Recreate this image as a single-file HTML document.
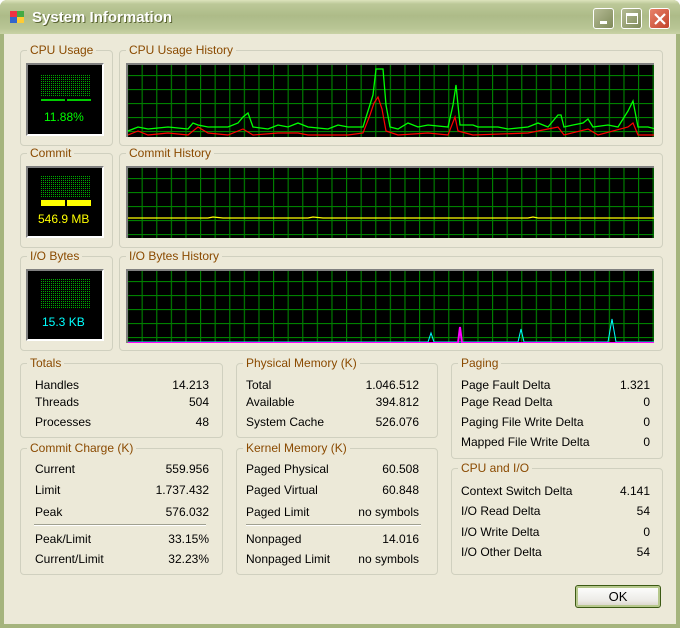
<!DOCTYPE html><html><head><style>
*{margin:0;padding:0;box-sizing:border-box}
body{width:680px;height:628px;overflow:hidden;background:#fff;font-family:"Liberation Sans",sans-serif;font-size:12px;color:#000}
#win{position:absolute;left:0;top:0;width:680px;height:628px;background:#a5b47d;border-radius:7px 7px 0 0}
#title{position:absolute;left:0;top:0;width:680px;height:34px;border-radius:7px 7px 0 0;background:linear-gradient(#dde3bd 0,#bcc898 4px,#adbb88 16px,#b8c594 28px,#c9d2a6 34px)}
#title span{position:absolute;left:32px;top:9px;color:#fff;font-weight:bold;font-size:15px;text-shadow:1px 1px 0 #5a6433}
#body{position:absolute;left:4px;top:34px;width:672px;height:590px;background:#ece9d8}
.btn{position:absolute;top:8px;width:21px;height:21px;border:1px solid #fff;border-radius:3px;background:linear-gradient(135deg,#b5bb95,#7f8a5a)}
.gb{position:absolute;border:1px solid #d0d0bf;border-radius:4px}
.gl{position:absolute;top:-8px;left:6px;background:#ece9d8;padding:0 3px;color:#8a4a00;font-size:12px;line-height:14px}
.t{position:absolute;font-size:12px;line-height:14px;white-space:nowrap}
.r{text-align:right}
.meter{position:absolute;background:#000;border:2px solid;border-color:#808080 #fff #fff #808080}
svg{position:absolute}
</style></head><body>
<div id="win">
<div id="title">
<svg style="left:8px;top:9px" width="18" height="16"><rect x="2" y="2" width="7" height="6" fill="#e34" /><rect x="9" y="2" width="7" height="6" fill="#4a4"/><rect x="2" y="8" width="7" height="6" fill="#36c"/><rect x="9" y="8" width="7" height="6" fill="#fc3"/></svg>
<span>System Information</span>
<div class="btn" style="left:593px"><div style="position:absolute;left:6px;top:12px;width:7px;height:3px;background:#fff"></div></div>
<div class="btn" style="left:621px"><div style="position:absolute;left:4px;top:4px;width:12px;height:11px;border:1px solid #fff;border-top-width:3px"></div></div>
<div class="btn" style="left:649px;background:linear-gradient(135deg,#e8826a,#c2432a)"><svg style="left:4px;top:4px" width="12" height="12"><path d="M1 1L11 11M11 1L1 11" stroke="#fff" stroke-width="2.2"/></svg></div>
</div>
<div id="body"></div>
</div>

<div class="gb" style="left:20px;top:50px;width:93px;height:96px"><div class="gl">CPU Usage</div></div>
<div class="gb" style="left:119px;top:50px;width:544px;height:96px"><div class="gl">CPU Usage History</div></div>
<div class="gb" style="left:20px;top:153px;width:93px;height:95px"><div class="gl">Commit</div></div>
<div class="gb" style="left:119px;top:153px;width:544px;height:95px"><div class="gl">Commit History</div></div>
<div class="gb" style="left:20px;top:256px;width:93px;height:95px"><div class="gl">I/O Bytes</div></div>
<div class="gb" style="left:119px;top:256px;width:544px;height:95px"><div class="gl">I/O Bytes History</div></div>

<div class="meter" style="left:26px;top:63px;width:78px;height:73px">
<svg style="left:13px;top:10px" width="50" height="30"><rect x="0" y="0" width="50" height="22" fill="url(#dots)"/><rect x="0" y="24" width="24" height="2" fill="#0c0"/><rect x="26" y="24" width="24" height="2" fill="#0c0"/></svg>
<div class="t" style="left:16px;top:45px;color:#0f0">11.88%</div></div>
<div class="meter" style="left:26px;top:166px;width:78px;height:72px">
<svg style="left:13px;top:8px" width="50" height="30"><rect x="0" y="0" width="50" height="22" fill="url(#dots)"/><rect x="0" y="24" width="24" height="6" fill="#ff0"/><rect x="26" y="24" width="24" height="6" fill="#ff0"/></svg>
<div class="t" style="left:10px;top:44px;color:#ff0">546.9 MB</div></div>
<div class="meter" style="left:26px;top:269px;width:78px;height:72px">
<svg style="left:13px;top:8px" width="50" height="30"><rect x="0" y="0" width="50" height="30" fill="url(#dots)"/></svg>
<div class="t" style="left:14px;top:44px;color:#0ff">15.3 KB</div></div>

<svg width="0" height="0"><defs>
<pattern id="dots" width="2" height="2" patternUnits="userSpaceOnUse"><rect width="1" height="1" fill="#0a0"/></pattern>
<pattern id="grid" width="14.6" height="14" patternUnits="userSpaceOnUse" x="-1" y="-4"><rect width="14.6" height="14" fill="#000"/><path d="M0.5 0V14M0 0.5H14.6" stroke="#008000" stroke-width="1.3"/></pattern>
</defs></svg>

<svg style="left:126px;top:63px;border-top:2px solid #808080;border-left:2px solid #808080" width="528" height="74"><rect width="528" height="74" fill="url(#grid)"/>
<polyline fill="none" stroke="#0f0" stroke-width="1.3" points="0,66 10,62 20,64 40,62 60,64 65,58 70,60 80,62 100,62 110,58 115,52 120,48 125,62 140,64 150,60 160,62 170,58 180,62 200,64 210,60 220,62 235,62 245,30 248,4 255,4 258,40 262,62 270,64 280,58 290,62 300,60 320,62 325,40 328,20 332,60 345,60 350,62 370,62 380,64 400,62 410,58 420,62 430,50 433,50 436,62 445,60 455,58 460,54 465,62 480,60 490,62 500,46 505,36 510,62 520,62 528,64"/>
<polyline fill="none" stroke="#f00" stroke-width="1.2" points="0,70 10,66 20,70 40,68 60,70 70,62 80,68 100,70 115,64 125,70 150,68 170,68 180,70 200,70 220,70 235,68 242,50 246,38 250,32 254,44 258,66 270,70 300,68 320,70 327,52 330,66 345,70 400,68 430,62 436,70 460,64 470,70 500,62 505,58 510,70 528,70"/>
</svg>
<svg style="left:126px;top:166px;border-top:2px solid #808080;border-left:2px solid #808080" width="528" height="72"><rect width="528" height="72" fill="url(#grid)"/>
<polyline fill="none" stroke="#ff0" stroke-width="1.2" points="0,50 80,50 85,49 95,50 180,50 185,49 195,50 400,50 405,49 410,50 528,50"/></svg>
<svg style="left:126px;top:269px;border-top:2px solid #808080;border-left:2px solid #808080" width="528" height="74"><rect width="528" height="74" fill="url(#grid)"/>
<polyline fill="none" stroke="#0ff" stroke-width="1" points="0,71 300,71 303,62 306,71 390,71 393,58 396,71 480,71 484,48 488,71 528,71"/>
<polyline fill="none" stroke="#f0f" stroke-width="2" points="0,72 330,72 332,56 334,72 528,72"/></svg>

<div class="gb" style="left:20px;top:363px;width:203px;height:75px"><div class="gl">Totals</div></div>
<div class="gb" style="left:236px;top:363px;width:202px;height:75px"><div class="gl">Physical Memory (K)</div></div>
<div class="gb" style="left:451px;top:363px;width:212px;height:96px"><div class="gl">Paging</div></div>
<div class="gb" style="left:20px;top:448px;width:203px;height:127px"><div class="gl">Commit Charge (K)</div></div>
<div class="gb" style="left:236px;top:448px;width:202px;height:127px"><div class="gl">Kernel Memory (K)</div></div>
<div class="gb" style="left:451px;top:468px;width:212px;height:107px"><div class="gl">CPU and I/O</div></div>

<div class="t" style="left:35px;top:378px">Handles</div><div class="t r" style="left:120px;width:89px;top:378px">14.213</div>
<div class="t" style="left:35px;top:395px">Threads</div><div class="t r" style="left:120px;width:89px;top:395px">504</div>
<div class="t" style="left:35px;top:415px">Processes</div><div class="t r" style="left:120px;width:89px;top:415px">48</div>

<div class="t" style="left:246px;top:378px">Total</div><div class="t r" style="left:330px;width:89px;top:378px">1.046.512</div>
<div class="t" style="left:246px;top:395px">Available</div><div class="t r" style="left:330px;width:89px;top:395px">394.812</div>
<div class="t" style="left:246px;top:415px">System Cache</div><div class="t r" style="left:330px;width:89px;top:415px">526.076</div>

<div class="t" style="left:461px;top:378px">Page Fault Delta</div><div class="t r" style="left:560px;width:90px;top:378px">1.321</div>
<div class="t" style="left:461px;top:395px">Page Read Delta</div><div class="t r" style="left:560px;width:90px;top:395px">0</div>
<div class="t" style="left:461px;top:415px">Paging File Write Delta</div><div class="t r" style="left:560px;width:90px;top:415px">0</div>
<div class="t" style="left:461px;top:435px">Mapped File Write Delta</div><div class="t r" style="left:560px;width:90px;top:435px">0</div>

<div class="t" style="left:35px;top:462px">Current</div><div class="t r" style="left:120px;width:89px;top:462px">559.956</div>
<div class="t" style="left:35px;top:483px">Limit</div><div class="t r" style="left:120px;width:89px;top:483px">1.737.432</div>
<div class="t" style="left:35px;top:505px">Peak</div><div class="t r" style="left:120px;width:89px;top:505px">576.032</div>
<div style="position:absolute;left:34px;top:524px;width:172px;height:2px;border-top:1px solid #a0a090;border-bottom:1px solid #fff"></div>
<div class="t" style="left:35px;top:532px">Peak/Limit</div><div class="t r" style="left:120px;width:89px;top:532px">33.15%</div>
<div class="t" style="left:35px;top:552px">Current/Limit</div><div class="t r" style="left:120px;width:89px;top:552px">32.23%</div>

<div class="t" style="left:246px;top:462px">Paged Physical</div><div class="t r" style="left:330px;width:89px;top:462px">60.508</div>
<div class="t" style="left:246px;top:483px">Paged Virtual</div><div class="t r" style="left:330px;width:89px;top:483px">60.848</div>
<div class="t" style="left:246px;top:505px">Paged Limit</div><div class="t r" style="left:330px;width:89px;top:505px">no symbols</div>
<div style="position:absolute;left:246px;top:524px;width:175px;height:2px;border-top:1px solid #a0a090;border-bottom:1px solid #fff"></div>
<div class="t" style="left:246px;top:532px">Nonpaged</div><div class="t r" style="left:330px;width:89px;top:532px">14.016</div>
<div class="t" style="left:246px;top:552px">Nonpaged Limit</div><div class="t r" style="left:330px;width:89px;top:552px">no symbols</div>

<div class="t" style="left:461px;top:484px">Context Switch Delta</div><div class="t r" style="left:560px;width:90px;top:484px">4.141</div>
<div class="t" style="left:461px;top:504px">I/O Read Delta</div><div class="t r" style="left:560px;width:90px;top:504px">54</div>
<div class="t" style="left:461px;top:525px">I/O Write Delta</div><div class="t r" style="left:560px;width:90px;top:525px">0</div>
<div class="t" style="left:461px;top:545px">I/O Other Delta</div><div class="t r" style="left:560px;width:90px;top:545px">54</div>

<div style="position:absolute;left:575px;top:585px;width:86px;height:23px;border:1px solid #3c5a14;border-radius:3px;background:linear-gradient(#fff,#ecebe6 70%,#d6d0c5);box-shadow:inset 0 0 0 2px #b6c88c;text-align:center;line-height:21px;font-size:13px">OK</div>
</body></html>
